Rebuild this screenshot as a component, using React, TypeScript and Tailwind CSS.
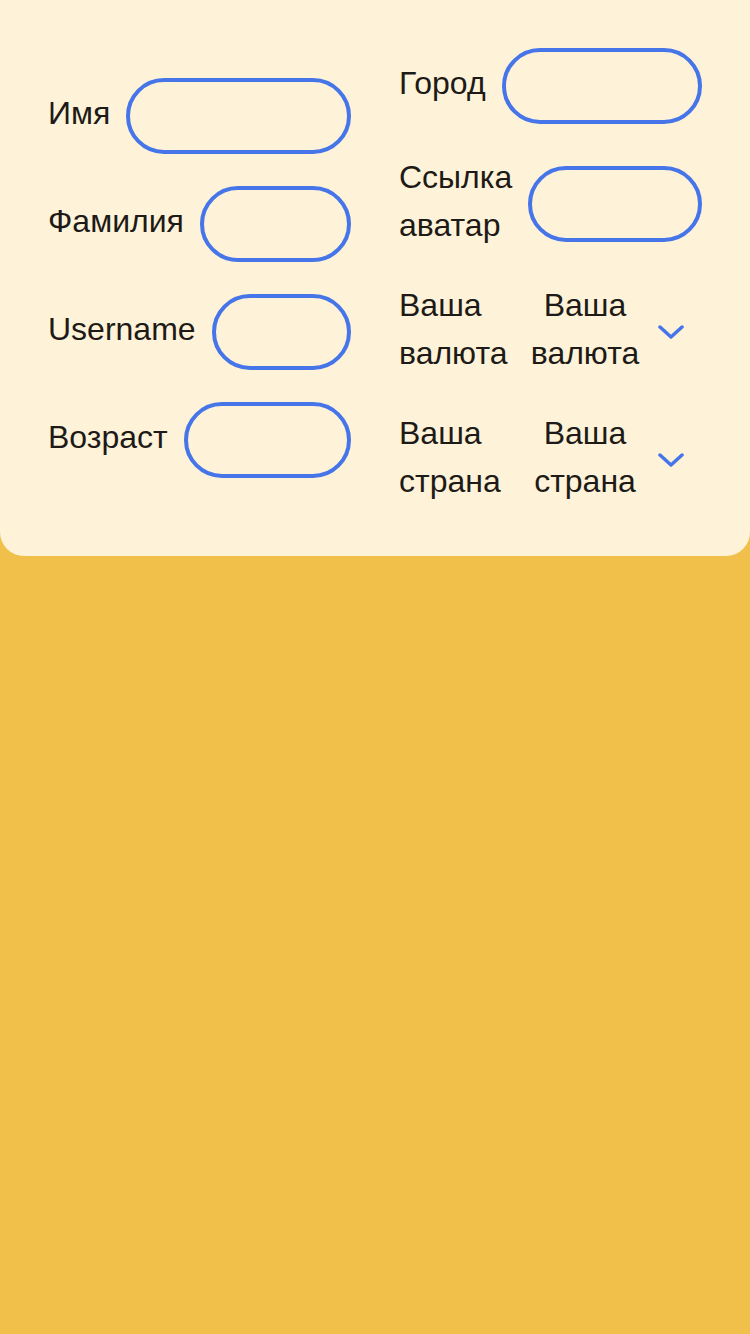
import { ReactNode } from 'react';

function Field({ label, wrap }: { label: string; wrap?: boolean }) {
  return (
    <div className="flex items-center gap-4">
      <span className={wrap ? 'mb-[3px] -mt-[3px] w-min shrink-0' : 'mb-[3px] -mt-[3px] shrink-0'}>{label}</span>
      <input className="h-[76px] min-w-0 flex-1 rounded-full border-4 border-[#4575e8] bg-transparent outline-none" />
    </div>
  );
}

function Chevron() {
  return (
    <svg width="26" height="15" viewBox="0 0 26 15" fill="none" className="shrink-0">
      <path d="M2 2l11 10L24 2" stroke="#4575e8" strokeWidth="3.5" strokeLinecap="round" strokeLinejoin="round" />
    </svg>
  );
}

function SelectRow({ label }: { label: string }) {
  return (
    <div className="flex items-center justify-between gap-4">
      <span className="mb-[3px] -mt-[3px] w-min shrink-0">{label}</span>
      <div className="flex w-[172px] items-center gap-4 pr-[18px]">
        <span className="mb-[3px] -mt-[3px] flex-1 pr-[2px] text-center">{label}</span>
        <Chevron />
      </div>
    </div>
  );
}

function Column({ children }: { children: ReactNode }) {
  return <div className="flex flex-col gap-8">{children}</div>;
}

export default function App() {
  return (
    <div
      className="min-h-screen bg-[#f0c04b] text-[32px] leading-[48px] text-[#1d1a17]"
      style={{ fontFamily: '"Liberation Sans", Arial, sans-serif' }}
    >
      <div className="grid grid-cols-2 items-center gap-12 rounded-b-3xl bg-[#fef3d8] p-12">
        <Column>
          <Field label="Имя" />
          <Field label="Фамилия" />
          <Field label="Username" />
          <Field label="Возраст" />
        </Column>
        <Column>
          <Field label="Город" />
          <Field label="Ссылка аватар" wrap />
          <SelectRow label="Ваша валюта" />
          <SelectRow label="Ваша страна" />
        </Column>
      </div>
    </div>
  );
}
